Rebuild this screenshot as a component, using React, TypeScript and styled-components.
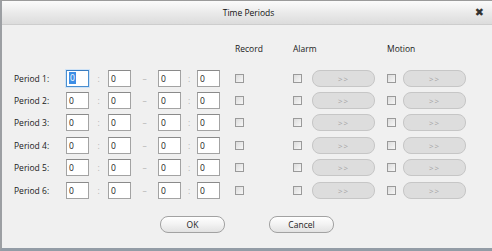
import styled, { createGlobalStyle } from "styled-components";

const GlobalStyle = createGlobalStyle`
  html, body {
    margin: 0;
    padding: 0;
    background: #f0f0f0;
  }
  body {
    font-family: "Open Sans", "DejaVu Sans", sans-serif;
  }
`;

const Window = styled.div`
  width: 492px;
  height: 251px;
  box-sizing: border-box;
  border-top: 1px solid #9a9a9a;
  border-left: 2px solid #9c9fa3;
  border-bottom: 3px solid #939ca6;
  background: #f0f0f0;
  display: flex;
  flex-direction: column;
  color: #1a1a1a;
  font-size: 8.5px;
`;

const TitleBar = styled.div`
  height: 23px;
  flex: none;
  display: flex;
  align-items: center;
  justify-content: center;
  position: relative;
  background: linear-gradient(#fbfbfb, #e9e9e9 55%, #dcdcdc);
  border-bottom: 1px solid #cdcdcd;
`;

const Title = styled.span`
  font-size: 8.5px;
  color: #111;
  margin-left: 3px;
`;

const Close = styled.span`
  position: absolute;
  right: 8px;
  top: 5px;
  font-size: 11px;
  font-weight: bold;
  color: #333;
  line-height: 12px;
`;

const Body = styled.div`
  padding: 17px 0 0 12px;
  display: flex;
  flex-direction: column;
`;

const HeaderRow = styled.div`
  display: flex;
  height: 12px;
  align-items: center;
  margin-bottom: 13px;
`;

const HeaderCell = styled.span<{ $w: number }>`
  width: ${(p) => p.$w}px;
  flex: none;
`;

const Row = styled.div`
  display: flex;
  align-items: center;
  height: 22.4px;
`;

const Label = styled.span`
  width: 52px;
  flex: none;
`;

const Field = styled.div<{ $focus?: boolean }>`
  width: 23px;
  height: 17px;
  box-sizing: border-box;
  flex: none;
  background: #fff;
  border: 1px solid ${(p) => (p.$focus ? "#4a8fd0" : "#a3a3a3")};
  border-top-color: ${(p) => (p.$focus ? "#3a7cc0" : "#8a8a8a")};
  display: flex;
  align-items: center;
  padding-left: 2px;
  box-shadow: ${(p) => (p.$focus ? "0 0 0 1px #cfe3f7" : "none")};
`;

const Selected = styled.span`
  background: #3d8ee6;
  color: #fff;
  padding: 0 1px;
  line-height: 12px;
`;

const Sep = styled.span<{ $w: number }>`
  width: ${(p) => p.$w}px;
  flex: none;
  text-align: center;
  color: #b4b4b4;
`;

const Check = styled.span<{ $ml: number }>`
  width: 9px;
  height: 9px;
  box-sizing: border-box;
  flex: none;
  margin-left: ${(p) => p.$ml}px;
  border: 1px solid #9a9a9a;
  background: linear-gradient(135deg, #dcdcdc, #f7f7f7);
`;

const Pick = styled.button<{ $ml: number }>`
  width: 63px;
  height: 17px;
  flex: none;
  margin-left: ${(p) => p.$ml}px;
  border: 1px solid #c6c6c6;
  border-radius: 8px;
  background: #dddddd;
  color: #a4a4a4;
  font-family: "Open Sans", "DejaVu Sans", sans-serif;
  font-size: 8px;
  letter-spacing: 1px;
  padding: 0;
`;

const Footer = styled.div`
  display: flex;
  justify-content: center;
  gap: 44px;
  margin-top: 15px;
  padding-right: 12px;
`;

const DialogButton = styled.button`
  width: 65px;
  height: 17px;
  border: 1px solid #a2a2a2;
  border-radius: 8px;
  background: linear-gradient(#ffffff, #f2f2f2 50%, #e2e2e2);
  color: #222;
  font-family: "Open Sans", "DejaVu Sans", sans-serif;
  font-size: 8.5px;
  padding: 0;
`;

const periods = [1, 2, 3, 4, 5, 6];

function PeriodRow({ n }: { n: number }) {
  return (
    <Row>
      <Label>Period {n}:</Label>
      <Field $focus={n === 1}>{n === 1 ? <Selected>0</Selected> : "0"}</Field>
      <Sep $w={19}>:</Sep>
      <Field>0</Field>
      <Sep $w={27}>–</Sep>
      <Field>0</Field>
      <Sep $w={16}>:</Sep>
      <Field>0</Field>
      <Check $ml={15} />
      <Check $ml={49} />
      <Pick $ml={10}>&gt;&gt;</Pick>
      <Check $ml={12} />
      <Pick $ml={7}>&gt;&gt;</Pick>
    </Row>
  );
}

export default function App() {
  return (
    <>
      <GlobalStyle />
      <Window>
        <TitleBar>
          <Title>Time Periods</Title>
          <Close>✖</Close>
        </TitleBar>
        <Body>
          <HeaderRow>
            <HeaderCell $w={221} />
            <HeaderCell $w={58}>Record</HeaderCell>
            <HeaderCell $w={94}>Alarm</HeaderCell>
            <HeaderCell $w={80}>Motion</HeaderCell>
          </HeaderRow>
          {periods.map((n) => (
            <PeriodRow key={n} n={n} />
          ))}
          <Footer>
            <DialogButton>OK</DialogButton>
            <DialogButton>Cancel</DialogButton>
          </Footer>
        </Body>
      </Window>
    </>
  );
}
